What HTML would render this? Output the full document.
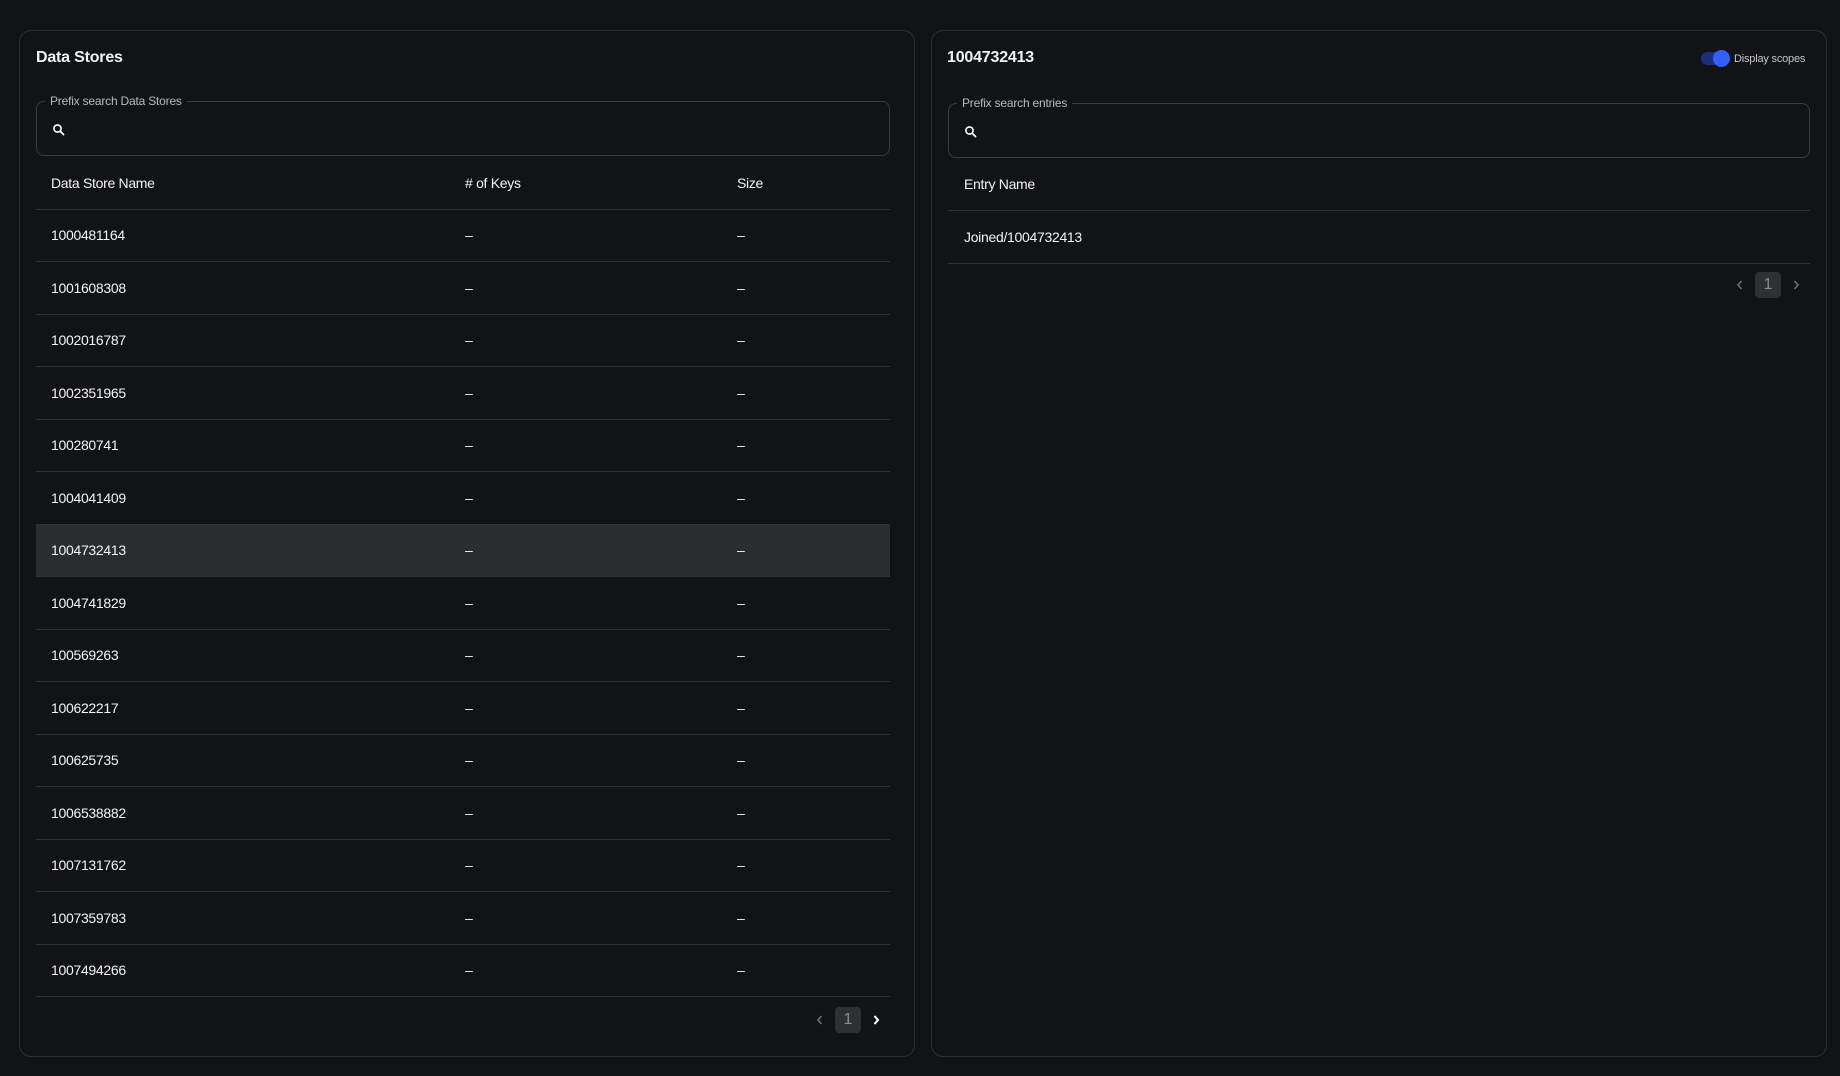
<!DOCTYPE html>
<html><head><meta charset="utf-8"><style>
*{box-sizing:border-box;margin:0;padding:0}
html,body{width:1840px;height:1076px;background:#121317;color:#f2f3f5;font-family:"Liberation Sans",sans-serif;overflow:hidden;position:relative}
.panel{position:absolute;top:30px;height:1027px;border:1px solid #2c2e33;border-radius:12px}
.abs{position:absolute}
.title{font-size:16px;font-weight:bold;white-space:nowrap;letter-spacing:-0.2px}
.field{position:absolute;border:1px solid #3a3c41;border-radius:8px;height:55px}
.field .lbl{position:absolute;top:-8px;left:8px;background:#121317;padding:0 5px;font-size:12px;color:#b8babd;line-height:14px;white-space:nowrap;letter-spacing:-0.2px}
.field svg{position:absolute;left:15px;top:21px}
.row{position:absolute;height:52.5px;border-bottom:1px solid #2f3136;font-size:14px;letter-spacing:-0.3px}
.row span{position:absolute;top:50%;transform:translateY(-50%);white-space:nowrap}
.sel{background:#2a2d30}
.pg{position:absolute;width:26px;height:26px;background:#2e3034;border-radius:4px;color:#8a8c90;font-size:16px;text-align:center;line-height:26px}
.chev{position:absolute}
</style></head><body>

<div class="panel" style="left:19px;width:896px"></div>
<div class="panel" style="left:931px;width:896px"></div>

<div class="abs title" style="left:36px;top:49px">Data Stores</div>
<div class="field" style="left:36px;top:101px;width:854px">
 <div class="lbl">Prefix search Data Stores</div>
 <svg width="14" height="14" viewBox="0 0 14 14"><circle cx="5.5" cy="5.5" r="3.6" fill="none" stroke="#fff" stroke-width="1.6"/><path d="M8.2 8.2 L11.5 11.5" stroke="#fff" stroke-width="1.8" stroke-linecap="round"/></svg>
</div>

<div id="lt"></div>

<div class="pg" style="left:835px;top:1007px">1</div>
<svg class="chev" style="left:815px;top:1014px" width="10" height="12" viewBox="0 0 10 12"><path d="M6.5 2 L3 6 L6.5 10" fill="none" stroke="#6d6f73" stroke-width="1.6"/></svg>
<svg class="chev" style="left:871px;top:1014px" width="10" height="12" viewBox="0 0 10 12"><path d="M3.5 2 L7 6 L3.5 10" fill="none" stroke="#fff" stroke-width="2"/></svg>

<div class="abs title" style="left:947px;top:49px">1004732413</div>
<div class="abs" style="left:1701px;top:52px;width:29px;height:13px;border-radius:7px;background:#1e2f7a"></div>
<div class="abs" style="left:1713px;top:50px;width:17px;height:17px;border-radius:50%;background:#335fff"></div>
<div class="abs" style="left:1734px;top:53px;font-size:11px;color:#c4c6c9;white-space:nowrap;letter-spacing:-0.2px">Display scopes</div>

<div class="field" style="left:948px;top:103px;width:862px">
 <div class="lbl">Prefix search entries</div>
 <svg width="14" height="14" viewBox="0 0 14 14"><circle cx="5.5" cy="5.5" r="3.6" fill="none" stroke="#fff" stroke-width="1.6"/><path d="M8.2 8.2 L11.5 11.5" stroke="#fff" stroke-width="1.8" stroke-linecap="round"/></svg>
</div>
<div class="row" style="left:948px;top:158px;width:862px;height:53px"><span style="left:16px">Entry Name</span></div>
<div class="row" style="left:948px;top:211px;width:862px;height:53px"><span style="left:16px">Joined/1004732413</span></div>
<div class="pg" style="left:1755px;top:272px">1</div>
<svg class="chev" style="left:1735px;top:279px" width="10" height="12" viewBox="0 0 10 12"><path d="M6.5 2 L3 6 L6.5 10" fill="none" stroke="#6d6f73" stroke-width="1.6"/></svg>
<svg class="chev" style="left:1791px;top:279px" width="10" height="12" viewBox="0 0 10 12"><path d="M3.5 2 L7 6 L3.5 10" fill="none" stroke="#6d6f73" stroke-width="1.6"/></svg>

<script>
var names=["1000481164","1001608308","1002016787","1002351965","100280741","1004041409","1004732413","1004741829","100569263","100622217","100625735","1006538882","1007131762","1007359783","1007494266"];
var h='<div class="row" style="left:36px;top:157px;width:854px;height:52.5px"><span style="left:15px">Data Store Name</span><span style="left:429px"># of Keys</span><span style="left:701px">Size</span></div>';
for(var i=0;i<names.length;i++){var t=209.5+i*52.5;
h+='<div class="row'+(i==6?' sel':'')+'" style="left:36px;top:'+t+'px;width:854px"><span style="left:15px">'+names[i]+'</span><span style="left:429px">–</span><span style="left:701px">–</span></div>';}
document.getElementById('lt').innerHTML=h;
</script>
</body></html>
